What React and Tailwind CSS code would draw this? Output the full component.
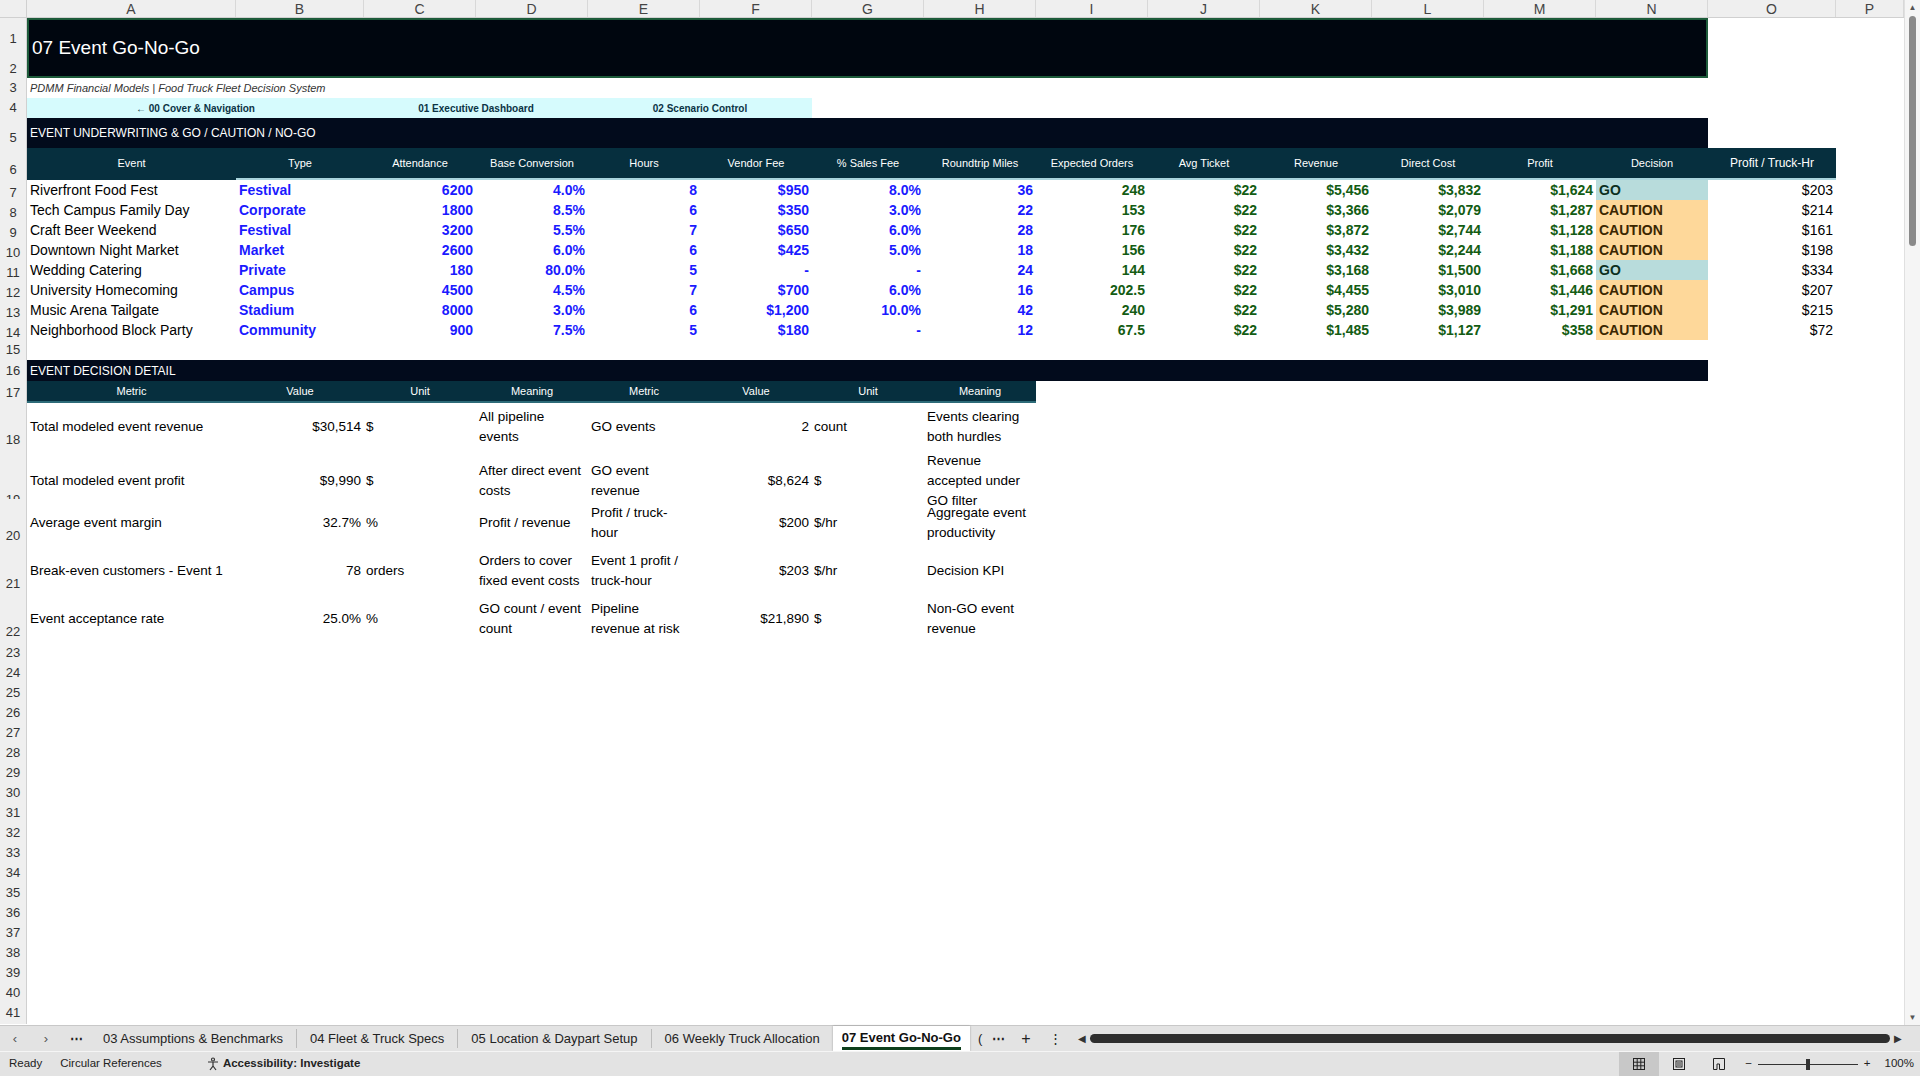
import React from "react";

const F = { fontFamily: '"Liberation Sans Narrow","Liberation Sans",Arial,sans-serif' };
const G = "grid grid-cols-[27px_209px_128px_repeat(12,112px)_128px_1fr]";
const RH = ({ n, cls = "" }) => (
  <div className={"bg-[#efefef] border-r border-[#d0d0d0] text-[#333] text-[13px] flex items-end justify-center pb-[1px] " + cls}>{n}</div>
);

const events = [
  ["Riverfront Food Fest", "Festival", "6200", "4.0%", "8", "$950", "8.0%", "36", "248", "$22", "$5,456", "$3,832", "$1,624", "GO", "$203"],
  ["Tech Campus Family Day", "Corporate", "1800", "8.5%", "6", "$350", "3.0%", "22", "153", "$22", "$3,366", "$2,079", "$1,287", "CAUTION", "$214"],
  ["Craft Beer Weekend", "Festival", "3200", "5.5%", "7", "$650", "6.0%", "28", "176", "$22", "$3,872", "$2,744", "$1,128", "CAUTION", "$161"],
  ["Downtown Night Market", "Market", "2600", "6.0%", "6", "$425", "5.0%", "18", "156", "$22", "$3,432", "$2,244", "$1,188", "CAUTION", "$198"],
  ["Wedding Catering", "Private", "180", "80.0%", "5", "-", "-", "24", "144", "$22", "$3,168", "$1,500", "$1,668", "GO", "$334"],
  ["University Homecoming", "Campus", "4500", "4.5%", "7", "$700", "6.0%", "16", "202.5", "$22", "$4,455", "$3,010", "$1,446", "CAUTION", "$207"],
  ["Music Arena Tailgate", "Stadium", "8000", "3.0%", "6", "$1,200", "10.0%", "42", "240", "$22", "$5,280", "$3,989", "$1,291", "CAUTION", "$215"],
  ["Neighborhood Block Party", "Community", "900", "7.5%", "5", "$180", "-", "12", "67.5", "$22", "$1,485", "$1,127", "$358", "CAUTION", "$72"],
];
const heads = ["Event", "Type", "Attendance", "Base Conversion", "Hours", "Vendor Fee", "% Sales Fee", "Roundtrip Miles", "Expected Orders", "Avg Ticket", "Revenue", "Direct Cost", "Profit", "Decision", "Profit / Truck-Hr"];

const detail = [
  ["Total modeled event revenue", "$30,514", "$", "All pipeline events", "GO events", "2", "count", "Events clearing both hurdles"],
  ["Total modeled event profit", "$9,990", "$", "After direct event costs", "GO event revenue", "$8,624", "$", "Revenue accepted under GO filter"],
  ["Average event margin", "32.7%", "%", "Profit / revenue", "Profit / truck-hour", "$200", "$/hr", "Aggregate event productivity"],
  ["Break-even customers - Event 1", "78", "orders", "Orders to cover fixed event costs", "Event 1 profit / truck-hour", "$203", "$/hr", "Decision KPI"],
  ["Event acceptance rate", "25.0%", "%", "GO count / event count", "Pipeline revenue at risk", "$21,890", "$", "Non-GO event revenue"],
];

const cols = ["A","B","C","D","E","F","G","H","I","J","K","L","M","N","O","P"];

export default function App() {
  const empty = [];
  for (let i = 23; i <= 41; i++) empty.push(i);
  return (
    <div style={F} className="w-[1920px] h-[1076px] overflow-hidden bg-white flex flex-col text-[13px]">
      <div className="flex flex-1 min-h-0">
        <div className="flex-1 flex flex-col overflow-hidden">
          {/* column headers */}
          <div className={G + " h-[18px] bg-[#efefef] border-b border-[#d0d0d0] text-[#444] text-[14px]"}>
            <div className="border-r border-[#d0d0d0]"></div>
            {cols.map((c) => (
              <div key={c} className="flex items-center justify-center border-r border-[#d8d8d8] leading-none">{c}</div>
            ))}
          </div>
          {/* rows 1-2 */}
          <div className={G + " h-[60px]"}>
            <div className="grid grid-rows-2 bg-[#efefef] border-r border-[#d0d0d0] text-[13px] text-[#333]">
              <div className="flex items-end justify-center">1</div>
              <div className="flex items-end justify-center">2</div>
            </div>
            <div className="col-span-14 bg-[#00060f] border-2 border-[#1d5b3a] flex items-center pl-[3px] text-white text-[19px] font-medium">07 Event Go-No-Go</div>
          </div>
          {/* row 3 */}
          <div className={G + " h-[20px]"}>
            <RH n="3" />
            <div className="col-span-6 italic text-[11px] text-[#333] flex items-center pl-[3px]">PDMM Financial Models | Food Truck Fleet Decision System</div>
          </div>
          {/* row 4 */}
          <div className={G + " h-[20px]"}>
            <RH n="4" />
            <div className="col-span-2 bg-[#d6fbfd] flex items-center justify-center text-[10px] font-bold text-[#0b3345]">← 00 Cover &amp; Navigation</div>
            <div className="col-span-2 bg-[#d6fbfd] flex items-center justify-center text-[10px] font-bold text-[#0b3345]">01 Executive Dashboard</div>
            <div className="col-span-2 bg-[#d6fbfd] flex items-center justify-center text-[10px] font-bold text-[#0b3345]">02 Scenario Control</div>
          </div>
          {/* row 5 */}
          <div className={G + " h-[30px]"}>
            <RH n="5" />
            <div className="col-span-14 bg-[#020b1c] text-white text-[12px] flex items-center pl-[3px]">EVENT UNDERWRITING &amp; GO / CAUTION / NO-GO</div>
          </div>
          {/* row 6 */}
          <div className={G + " h-[32px]"}>
            <RH n="6" />
            {heads.map((h, i) => (
              <div key={h} className={"bg-[#062f3e] text-white text-[11px] flex items-center justify-center border-b-2 " + (i === 0 ? "border-[#062f3e]" : "border-[#a9d4dc]") + (i === 14 ? " text-[12px]" : "")}>{h}</div>
            ))}
          </div>
          {/* data rows */}
          {events.map((r, ri) => (
            <div key={ri} className={G + " h-[20px] leading-none"}>
              <RH n={String(7 + ri)} />
              <div className="flex items-center pl-[3px] text-black text-[14px]">{r[0]}</div>
              <div className="flex items-center pl-[3px] text-[#1a1aff] text-[14px] font-semibold">{r[1]}</div>
              {r.slice(2, 8).map((v, k) => (
                <div key={k} className="flex items-center justify-end pr-[3px] text-[#1a1aff] text-[14px] font-semibold">{v}</div>
              ))}
              {r.slice(8, 13).map((v, k) => (
                <div key={k} className="flex items-center justify-end pr-[3px] text-[#135c13] text-[14px] font-semibold">{v}</div>
              ))}
              <div className={"flex items-center pl-[3px] text-[14px] font-bold " + (r[13] === "GO" ? "bg-[#b8dcdc] text-[#0b2f1f]" : "bg-[#fed89a] text-[#3b2600]")}>{r[13]}</div>
              <div className="flex items-center justify-end pr-[3px] text-black text-[14px]">{r[14]}</div>
            </div>
          ))}
          <div className={G + " h-[20px]"}><RH n="15" /></div>
          <div className={G + " h-[21px]"}>
            <RH n="16" />
            <div className="col-span-14 bg-[#020b1c] text-white text-[12px] flex items-center pl-[3px]">EVENT DECISION DETAIL</div>
          </div>
          <div className={G + " h-[22px]"}>
            <RH n="17" />
            {["Metric","Value","Unit","Meaning","Metric","Value","Unit","Meaning"].map((h, i) => (
              <div key={i} className="bg-[#062f3e] text-white text-[11px] flex items-center justify-center border-b-2 border-[#2d6b78]">{h}</div>
            ))}
          </div>
          {detail.map((d, i) => (
            <div key={i} className={G + " h-[48px] text-[13.5px] text-black leading-[20px] font-medium"}>
              <RH n={String(18 + i)} />
              <div className="flex items-center pl-[3px]">{d[0]}</div>
              <div className="flex items-center justify-end pr-[3px]">{d[1]}</div>
              <div className="flex items-center pl-[2px]">{d[2]}</div>
              <div className="flex items-center pl-[3px] pr-[4px]">{d[3]}</div>
              <div className="flex items-center pl-[3px] pr-[10px]">{d[4]}</div>
              <div className="flex items-center justify-end pr-[3px]">{d[5]}</div>
              <div className="flex items-center pl-[2px]">{d[6]}</div>
              <div className="flex items-center pl-[3px] pr-[4px]">{d[7]}</div>
            </div>
          ))}
          {empty.map((n) => (
            <div key={n} className={G + " h-[20px]"}><RH n={String(n)} /></div>
          ))}
        </div>
        {/* vertical scrollbar */}
        <div className="w-[16px] bg-[#f5f5f5] border-l border-[#e0e0e0] flex flex-col items-center pt-[4px]">
          <div className="text-[8px] text-[#555] leading-none">▲</div>
          <div className="w-[7px] h-[230px] mt-[4px] rounded-full bg-[#8a8a8a]"></div>
          <div className="flex-1"></div>
          <div className="text-[8px] text-[#555] leading-none pb-[3px]">▼</div>
        </div>
      </div>
      {/* tab bar */}
      <div className="h-[26px] bg-[#e3e3e3] border-t border-[#c8c8c8] flex items-center text-[13px] text-[#222]">
        <div className="w-[30px] text-center text-[#555]">‹</div>
        <div className="w-[32px] text-center text-[#555]">›</div>
        <div className="w-[28px] text-center font-bold">⋯</div>
        <div className="px-[13px] border-r border-[#bbb]">03 Assumptions &amp; Benchmarks</div>
        <div className="px-[13px] border-r border-[#bbb]">04 Fleet &amp; Truck Specs</div>
        <div className="px-[13px] border-r border-[#bbb]">05 Location &amp; Daypart Setup</div>
        <div className="px-[13px]">06 Weekly Truck Allocation</div>
        <div className="h-full bg-white px-[9px] flex flex-col justify-center items-center shadow-[0_0_2px_rgba(0,0,0,0.3)]">
          <span className="font-bold text-[#111] leading-none pt-[3px]">07 Event Go-No-Go</span>
          <span className="w-full h-[3px] bg-[#0e3f1c] mt-[3px]"></span>
        </div>
        <div className="px-[8px]">(</div>
        <div className="font-bold px-[2px]">⋯</div>
        <div className="px-[14px] text-[16px]">+</div>
        <div className="px-[4px]">⋮</div>
        <div className="ml-[12px] text-[10px] text-[#333]">◀</div>
        <div className="flex-1 h-[9px] mx-[4px] rounded-full bg-[#2e2e2e]"></div>
        <div className="text-[10px] text-[#333] mr-[18px]">▶</div>
      </div>
      {/* status bar */}
      <div className="h-[25px] bg-[#e3e3e3] border-t border-[#f5f5f5] flex items-center text-[11.5px] text-[#222]">
        <span className="pl-[9px]">Ready</span>
        <span className="pl-[18px]">Circular References</span>
        <span className="pl-[44px] flex items-center gap-[3px] font-bold">
          <svg width="14" height="14" viewBox="0 0 14 14" fill="none" stroke="#333" strokeWidth="1.2"><circle cx="7" cy="2.5" r="1.5"/><path d="M2 5h10M7 5v4l-3 4M7 9l3 4"/></svg>
          Accessibility: Investigate
        </span>
        <div className="flex-1"></div>
        <div className="h-full w-[40px] bg-[#c8c8c8] flex items-center justify-center">
          <svg width="14" height="14" viewBox="0 0 14 14" fill="none" stroke="#222"><rect x="1.5" y="1.5" width="11" height="11"/><path d="M5.2 1.5v11M8.8 1.5v11M1.5 5.2h11M1.5 8.8h11"/></svg>
        </div>
        <div className="w-[40px] flex items-center justify-center">
          <svg width="14" height="14" viewBox="0 0 14 14" fill="none" stroke="#222"><rect x="1.5" y="1.5" width="11" height="11"/><rect x="4" y="4" width="6" height="6"/><path d="M5 6h4M5 8h4"/></svg>
        </div>
        <div className="w-[40px] flex items-center justify-center">
          <svg width="14" height="14" viewBox="0 0 14 14" fill="none" stroke="#222"><path d="M1.5 12.5V1.5h11v11H7.5V7H5v5.5z"/></svg>
        </div>
        <span className="ml-[6px]">−</span>
        <div className="relative w-[100px] h-[1px] bg-[#333] mx-[6px]">
          <div className="absolute left-[48px] top-[-5px] w-[4px] h-[11px] bg-[#333]"></div>
        </div>
        <span>+</span>
        <span className="pl-[14px] pr-[6px]">100%</span>
      </div>
    </div>
  );
}
